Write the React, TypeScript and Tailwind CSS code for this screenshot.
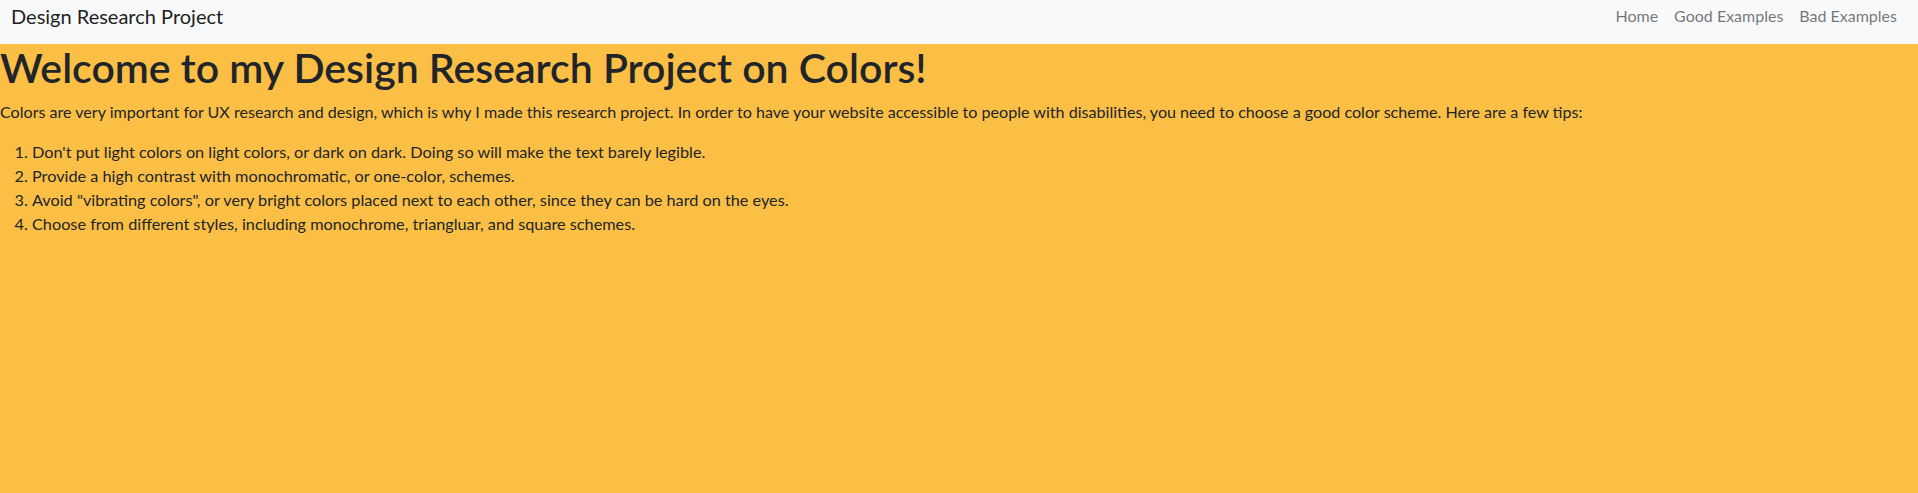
const tips = [
  "Don't put light colors on light colors, or dark on dark. Doing so will make the text barely legible.",
  "Provide a high contrast with monochromatic, or one-color, schemes.",
  "Avoid \"vibrating colors\", or very bright colors placed next to each other, since they can be hard on the eyes.",
  "Choose from different styles, including monochrome, triangluar, and square schemes.",
];

const links = ["Home", "Good Examples", "Bad Examples"];

export default function App() {
  return (
    <div className="min-h-[493px] bg-[#fbbf45] font-['Lato',sans-serif] text-[#212529]">
      <nav className="flex h-[44px] items-start justify-between bg-[#f8f9fa] pl-[11px] pr-[13px]">
        <a className="pt-[1px] text-[20px] leading-[30px] text-black/90">Design Research Project</a>
        <ul className="flex pt-[4px]">
          {links.map((l) => (
            <li key={l}>
              <a className="px-2 text-[16px] leading-[24px] text-black/55">{l}</a>
            </li>
          ))}
        </ul>
      </nav>
      <h1 className="mb-2 text-[41px] font-semibold leading-[48px]">
        Welcome to my Design Research Project on Colors!
      </h1>
      <p className="mb-4 text-[16.1px] leading-[24px]">
        Colors are very important for UX research and design, which is why I made this research project. In order to
        have your website accessible to people with disabilities, you need to choose a good color scheme. Here are a few
        tips:
      </p>
      <ol className="list-decimal pl-8 text-[16.25px] leading-[24px]">
        {tips.map((t) => (
          <li key={t}>{t}</li>
        ))}
      </ol>
    </div>
  );
}
